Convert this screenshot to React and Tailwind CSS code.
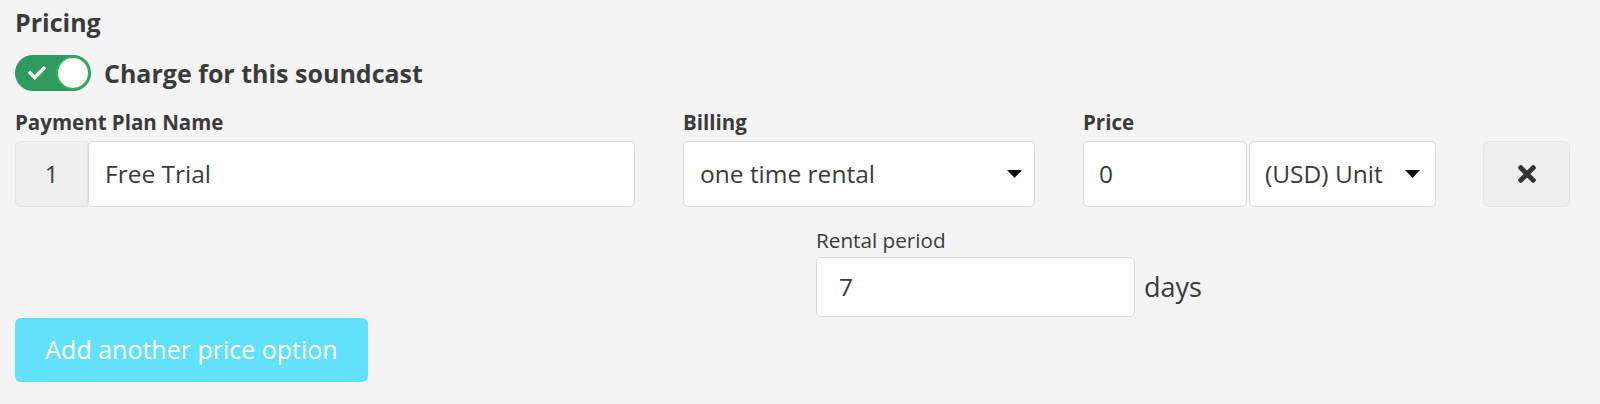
import { FaCheck, FaTimes } from 'react-icons/fa';

function Caret() {
  return (
    <svg width="15" height="8" viewBox="0 0 15 8" className="flex-shrink-0">
      <path d="M0 0 L15 0 L7.5 8 Z" fill="#111" />
    </svg>
  );
}

export default function App() {
  return (
    <div
      className="min-h-[404px] w-full bg-[#f4f4f4] px-[15px] pt-[6px] text-[#3b3b3b]"
      style={{ fontFamily: '"Open Sans", "Noto Sans", sans-serif' }}
    >
      <h2 className="text-[25px] font-bold leading-8">Pricing</h2>

      {/* Charge toggle */}
      <div className="mt-[17px] flex items-center gap-[13px]">
        <div className="flex h-9 w-[76px] items-center justify-between rounded-full bg-[#2f9a5e] pl-[13px] pr-[1px]">
          <FaCheck className="text-white" size={18} />
          <div className="h-[34px] w-[34px] rounded-full border-2 border-[#2fae5f] bg-white" />
        </div>
        <span className="text-[25px] font-bold leading-8">Charge for this soundcast</span>
      </div>

      {/* Plan row */}
      <div className="mt-[17px] flex items-end">
        <div className="w-[620px]">
          <label className="block text-[20.5px] font-bold leading-7 mb-[5px]">Payment Plan Name</label>
          <div className="flex h-[66px]">
            <div className="flex w-[73px] items-center justify-center rounded-l-[6px] border border-[#e4e4e4] bg-[#efefef] text-[24px]">
              1
            </div>
            <div className="flex flex-1 items-center rounded-[5px] border border-[#dcdcdc] bg-white px-[16px] text-[24.5px]">
              Free Trial
            </div>
          </div>
        </div>

        <div className="ml-[48px] w-[352px]">
          <label className="block text-[20.5px] font-bold leading-7 mb-[5px]">Billing</label>
          <div className="flex h-[66px] items-center justify-between rounded-[5px] border border-[#dcdcdc] bg-white pl-[16px] pr-[12px] text-[24.5px]">
            <span>one time rental</span>
            <Caret />
          </div>
        </div>

        <div className="ml-[48px]">
          <label className="block text-[20.5px] font-bold leading-7 mb-[5px]">Price</label>
          <div className="flex h-[66px] gap-[2px]">
            <div className="flex w-[164px] items-center rounded-[5px] border border-[#dcdcdc] bg-white px-[15px] text-[24.5px]">
              0
            </div>
            <div className="flex w-[187px] items-center justify-between rounded-[5px] border border-[#dcdcdc] bg-white pl-[15px] pr-[15px] text-[24.5px]">
              <span>(USD) Unit</span>
              <Caret />
            </div>
          </div>
        </div>

        <button className="ml-[47px] flex h-[66px] w-[87px] items-center justify-center rounded-[6px] border border-[#e4e4e4] bg-[#eeeeee] text-[#333]">
          <FaTimes size={26} />
        </button>
      </div>

      {/* Rental period */}
      <div className="mt-[19px] ml-[801px]">
        <label className="block text-[20.7px] leading-7 mb-[3px]">Rental period</label>
        <div className="flex items-center gap-[9px]">
          <div className="flex h-[60px] w-[319px] items-center rounded-[5px] border border-[#dcdcdc] bg-white px-[22px] text-[24.5px]">
            7
          </div>
          <span className="text-[27px] leading-8">days</span>
        </div>
      </div>

      <button className="mt-[1px] h-[64px] w-[353px] rounded-[6px] bg-[#63e1fc] text-[25px] text-white">
        Add another price option
      </button>
    </div>
  );
}
